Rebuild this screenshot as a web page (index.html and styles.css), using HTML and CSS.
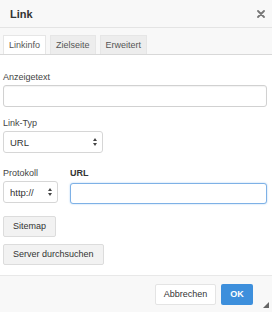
FILE: index.html
```html
<!DOCTYPE html>
<html>
<head>
<meta charset="utf-8">
<link rel="stylesheet" href="styles.css">
</head>
<body>
<div class="dialog">
  <div class="titlebar">
    <span class="title">Link</span>
    <svg class="close" width="8" height="8" viewBox="0 0 8 8"><path d="M1 1L7 7M7 1L1 7" stroke="#777" stroke-width="1.8" stroke-linecap="round"/></svg>
  </div>
  <div class="tabs">
    <div class="tab active">Linkinfo</div>
    <div class="tab">Zielseite</div>
    <div class="tab">Erweitert</div>
  </div>
  <div class="body">
    <div class="field f1">
      <label class="lbl">Anzeigetext</label>
      <div class="input wide"></div>
    </div>
    <div class="field f2">
      <label class="lbl">Link-Typ</label>
      <div class="select typ"><span>URL</span><svg class="arr" width="4" height="8" viewBox="0 0 4 8"><path d="M2 0L4 3H0Z M2 8L0 5H4Z" fill="#444"/></svg></div>
    </div>
    <div class="row f3">
      <div class="field">
        <label class="lbl">Protokoll</label>
        <div class="select proto"><span>http://</span><svg class="arr" width="4" height="8" viewBox="0 0 4 8"><path d="M2 0L4 3H0Z M2 8L0 5H4Z" fill="#444"/></svg></div>
      </div>
      <div class="field grow">
        <label class="lbl bold">URL</label>
        <div class="input focus"></div>
      </div>
    </div>
    <div class="btn b1">Sitemap</div>
    <div class="btn b2">Server durchsuchen</div>
  </div>
  <div class="footer">
    <div class="fbtn cancel">Abbrechen</div>
    <div class="fbtn ok">OK</div>
    <div class="resize"></div>
  </div>
</div>
</body>
</html>
```
FILE: styles.css
```css
* { box-sizing: border-box; }
html, body { margin: 0; padding: 0; background: #fff; }
body { font-family: "Liberation Sans", Arial, sans-serif; color: #333; }
.dialog { width: 272px; height: 312px; display: flex; flex-direction: column; overflow: hidden; }
.titlebar { height: 28px; background: #f8f8f8; border-bottom: 1px solid #e4e4e4; display: flex; align-items: center; justify-content: space-between; padding: 0 7px 0 10px; }
.title { font-size: 11px; font-weight: bold; color: #333; }
.close { display: block; }
.tabs { height: 27px; background: #f8f8f8; border-bottom: 1px solid #d8d8d8; display: flex; align-items: flex-end; padding-left: 3px; gap: 4px; }
.tab { height: 19px; padding: 0 5px; font-size: 9px; line-height: 19px; color: #555; background: #ededed; border: 1px solid #e6e6e6; border-bottom: none; }
.tab.active { background: #fff; border-color: #e6e6e6; width: 43px; }
.body { flex: 1; padding: 17px 5px 0 3px; display: flex; flex-direction: column; align-items: flex-start; }
.field { display: flex; flex-direction: column; }
.f1 { align-self: stretch; }
.lbl { font-size: 9px; line-height: 11px; color: #444; margin-bottom: 2px; }
.bold { font-weight: bold; color: #333; }
.input { height: 22px; border: 1px solid #d1d1d1; border-radius: 3px; background: #fff; box-shadow: inset 0 1px 1px rgba(0,0,0,0.05); }
.wide { width: 100%; }
.f2 { margin-top: 11px; }
.select { height: 22px; border: 1px solid #d6d6d6; border-radius: 3px; background: #fff; display: flex; align-items: center; justify-content: space-between; padding: 0 5px 0 6px; font-size: 9.5px; color: #333; }
.typ { width: 100px; }
.proto { width: 55px; }
.row { display: flex; align-self: stretch; gap: 12px; margin-top: 15px; }
.grow { flex: 1; }
.input.focus { border-color: #7eb1e6; box-shadow: 0 0 2px #a9cdf2; margin-top: 2px; height: 21px; }
.btn { height: 21px; padding: 0 9px; font-size: 9px; line-height: 19px; color: #333; background: #f2f2f2; border: 1px solid #dcdcdc; border-radius: 2px; }
.b1 { margin-top: 12px; }
.b2 { margin-top: 7px; }
.footer { height: 37px; background: #f8f8f8; border-top: 1px solid #e8e8e8; display: flex; align-items: center; justify-content: flex-end; padding-right: 19px; gap: 5px; position: relative; }
.fbtn { height: 21px; font-size: 9px; line-height: 21px; text-align: center; border-radius: 2px; }
.cancel { width: 61px; background: #fff; color: #333; border: 1px solid #e4e4e4; line-height: 19px; }
.ok { width: 32px; background: #3d8fdc; color: #fff; font-weight: bold; }
.resize { position: absolute; right: 3px; bottom: 4px; width: 0; height: 0; border-left: 6px solid transparent; border-bottom: 6px solid #666; }
```
